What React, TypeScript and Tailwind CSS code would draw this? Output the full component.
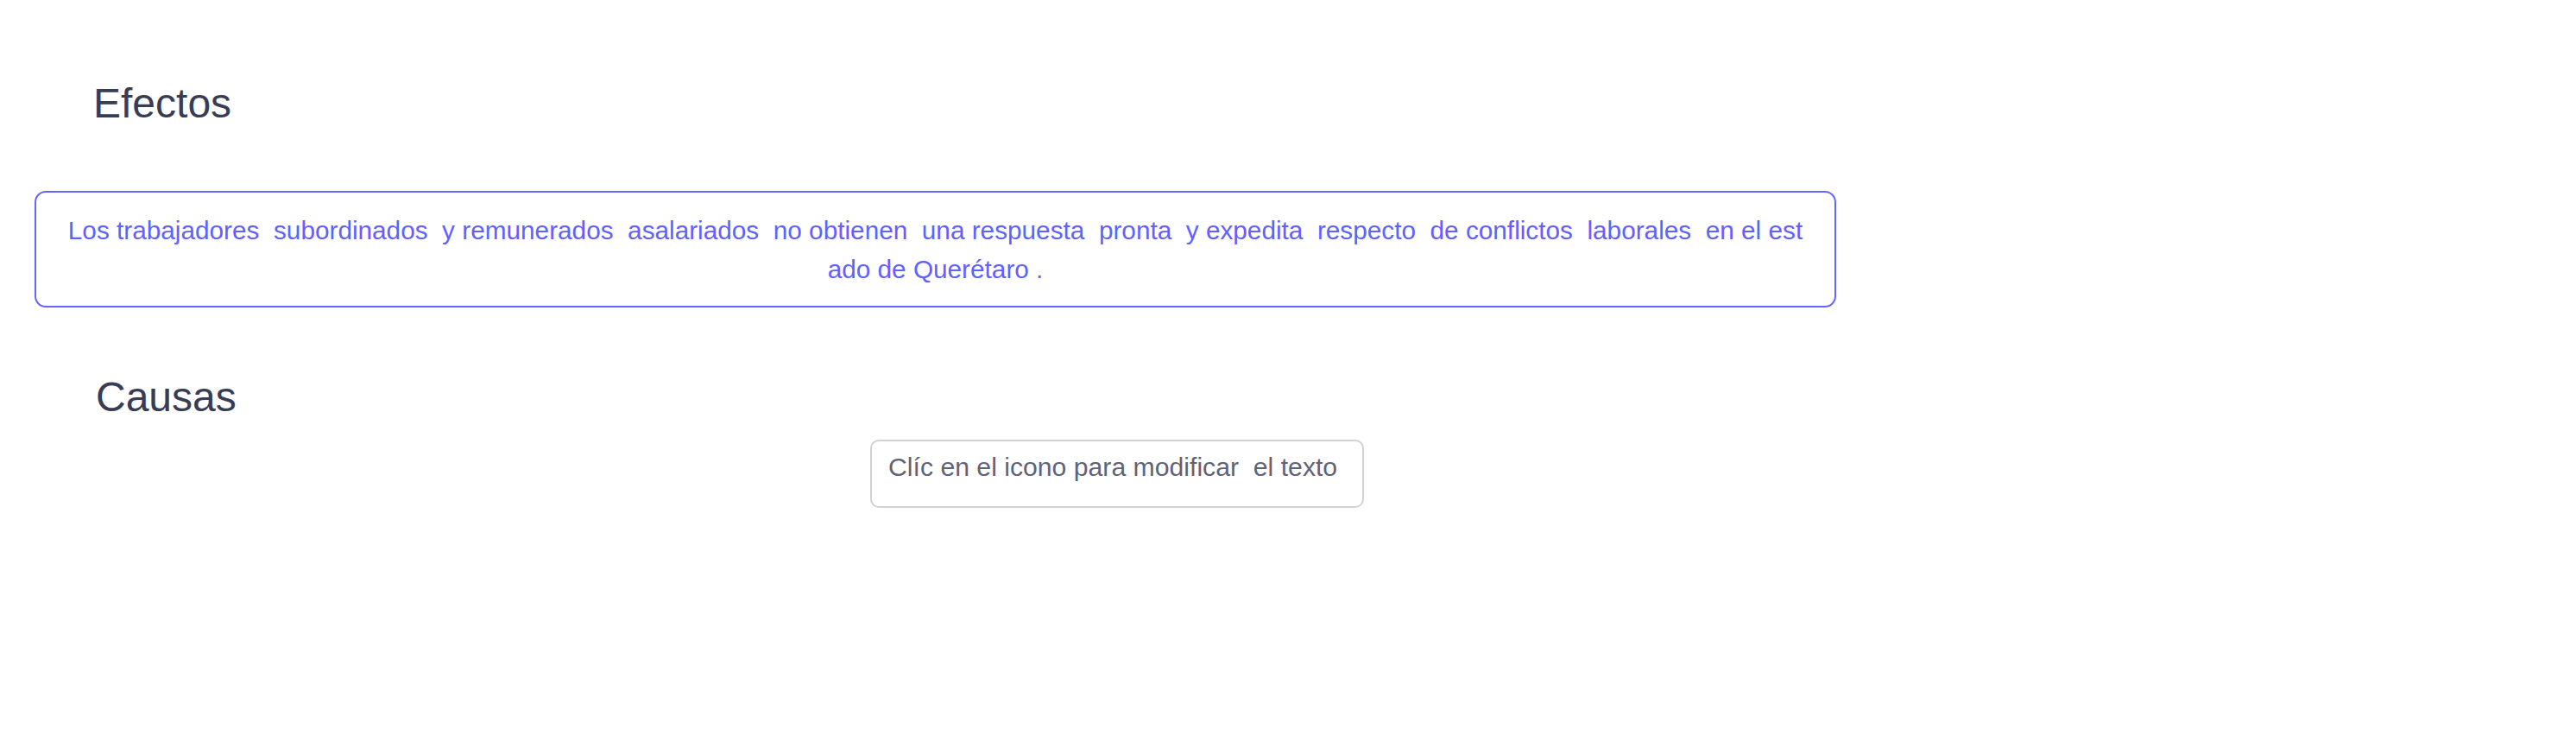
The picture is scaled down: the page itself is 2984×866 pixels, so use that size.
import React from 'react';

const efecto =
    'Los trabajadores  subordinados  y remunerados  asalariados  no obtienen  una respuesta  pronta  y expedita  respecto  de conflictos  laborales  en el estado de Querétaro .';

const App: React.FC = () => {
    return (
        <div className="min-h-[866px] w-full bg-white pt-[84px] font-['Liberation_Sans',Arial,sans-serif]">
            <h2 className="ml-[108px] text-[48px] leading-[71px] font-normal text-[#383d54]">Efectos</h2>

            <div className="ml-[40px] mt-[66px] w-[2087px] rounded-[13px] border-2 border-[#6464ff] px-[34px] pt-[22px] pb-[20px]">
                <p className="text-center text-[29.76px] leading-[44.6px] text-[#6161ff] whitespace-pre-wrap break-all">
                    {efecto}
                </p>
            </div>

            <h2 className="ml-[111px] mt-[68px] text-[48px] leading-[71px] font-normal text-[#383d54]">Causas</h2>

            <div className="ml-[1008px] mt-[14px] h-[79px] w-[572px] rounded-[10px] border-2 border-[#d2d2d2] pl-[19px] pt-[8px]">
                <p className="text-[30.2px] leading-[44.6px] text-[#5f6378] whitespace-pre-wrap">
                    {'Clíc en el icono para modificar  el texto'}
                </p>
            </div>
        </div>
    );
};

export default App;
